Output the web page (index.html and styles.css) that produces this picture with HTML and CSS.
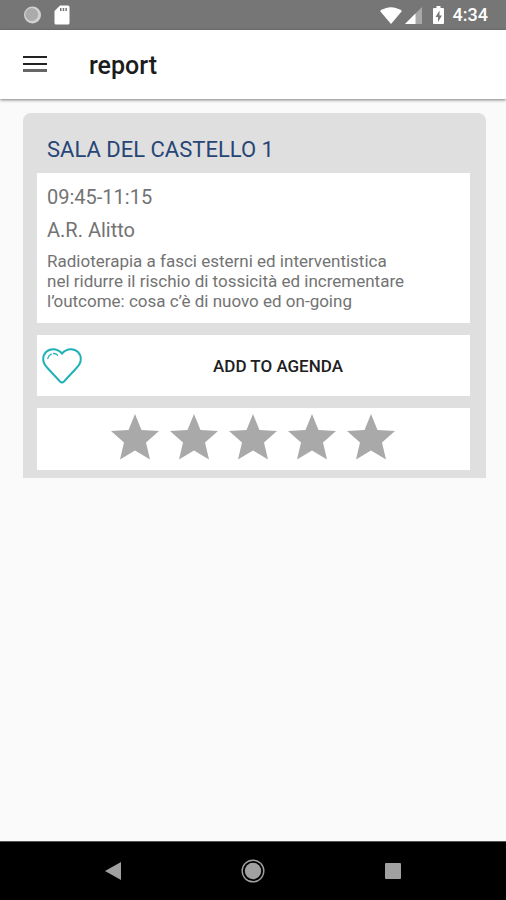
FILE: index.html
```html
<!DOCTYPE html>
<html lang="it">
<head>
<meta charset="utf-8">
<meta name="viewport" content="width=device-width, initial-scale=1">
<title>report</title>
<link rel="stylesheet" href="styles.css">
</head>
<body>
<svg class="defs" aria-hidden="true">
  <symbol id="star" viewBox="0 0 48 46"><path d="M24 0 30.500 16 48 17 35 28.500 39 45.500 24 36.500 9 45.500 13 28.500 0 17 17.500 16Z"/></symbol>
</svg>
<div class="status-bar">
  <div class="status-group notices">
    <svg width="20" height="20" viewBox="0 0 20 20" aria-hidden="true"><circle cx="10.500" cy="10" r="8.500" fill="#d2d2d2"/><circle cx="9.700" cy="9.500" r="6.500" fill="#ababab"/></svg>
    <svg width="16" height="20" viewBox="0 0 16 20" aria-hidden="true"><path fill="#fff" fill-rule="evenodd" d="M6 .5h8q1.500 0 1.500 1.500v16q0 1.500-1.500 1.500H2Q.5 19.500.5 18V6ZM6 3v3h1.500V3Zm2.700 0v3h1.500V3Zm2.700 0v3h1.500V3Z"/></svg>
  </div>
  <div class="status-group">
    <svg width="22" height="17" viewBox="0 0 22 17" aria-hidden="true"><path fill="#fff" d="M0 4Q11-3.500 22 4L11 17Z"/></svg>
    <svg width="17" height="17" viewBox="0 0 17 17" aria-hidden="true"><path fill="#a8a8a8" d="M17 0v17H0Z"/><path fill="#fff" d="M10.500 6.500V17H0Z"/></svg>
    <svg class="battery" width="11" height="18" viewBox="0 0 11 18" aria-hidden="true"><path fill="#fff" d="M3.500 0h4v2H10q1 0 1 1v14q0 1-1 1H1q-1 0-1-1V3q0-1 1-1h2.500Z"/><path fill="#767676" d="M6.500 4.500 2.500 11H5v5l4-6.500H6.500Z"/></svg>
    <time class="clock">4:34</time>
  </div>
</div>
<header class="app-bar">
  <button class="menu-button" type="button" aria-label="Menu">
    <svg width="24" height="18" viewBox="0 0 24 18" aria-hidden="true"><path fill="#222" d="M0 0h24v2H0ZM0 7h24v2H0Z"/><path fill="#666" d="M0 13h24v3H0Z"/></svg>
  </button>
  <h1 class="title">report</h1>
</header>
<main class="content">
  <article class="card">
    <h2 class="room">SALA DEL CASTELLO 1</h2>
    <section class="panel details">
      <p class="meta">09:45-11:15</p>
      <p class="meta">A.R. Alitto</p>
      <p class="topic">Radioterapia a fasci esterni ed interventistica<br>nel ridurre il rischio di tossicità ed incrementare<br>l’outcome: cosa c’è di nuovo ed on-going</p>
    </section>
    <section class="panel agenda">
      <button class="heart-button" type="button" aria-label="Preferiti">
        <svg width="40" height="36" viewBox="0 0 40 36" fill="none" stroke="#20b2b8" stroke-linecap="round" aria-hidden="true"><path stroke-width="2" d="M20 5.500C17 2 14.500 1.200 11 1.200 5.500 1.200 1.200 5.500 1.200 11c0 4 1.800 6.500 4.300 9L18 33.500q2 2 4 0L34.500 20c2.500-2.500 4.300-5 4.300-9 0-5.500-4.300-9.800-9.800-9.800-3.500 0-6 .8-9 4.300Z"/><path stroke-width="1.300" d="M5.800 10.500q.6-3.200 3.500-4.400M11.500 5.500q2.500-.2 4 1.700"/></svg>
      </button>
      <button class="agenda-button" type="button">ADD TO AGENDA</button>
    </section>
    <section class="panel rating" aria-label="Valutazione">
      <button class="star" type="button" aria-label="1"><svg width="48" height="46"><use href="#star"/></svg></button>
      <button class="star" type="button" aria-label="2"><svg width="48" height="46"><use href="#star"/></svg></button>
      <button class="star" type="button" aria-label="3"><svg width="48" height="46"><use href="#star"/></svg></button>
      <button class="star" type="button" aria-label="4"><svg width="48" height="46"><use href="#star"/></svg></button>
      <button class="star" type="button" aria-label="5"><svg width="48" height="46"><use href="#star"/></svg></button>
    </section>
  </article>
</main>
<nav class="nav-bar">
  <button type="button" aria-label="Back"><svg width="24" height="24" viewBox="0 0 24 24" aria-hidden="true"><path fill="#a0a0a0" d="M4 12 20 3v18Z"/></svg></button>
  <button type="button" aria-label="Home"><svg width="24" height="24" viewBox="0 0 24 24" aria-hidden="true"><circle cx="12" cy="12" r="8.200" fill="#a0a0a0"/><circle cx="12" cy="12" r="10.800" fill="none" stroke="#a0a0a0" stroke-width="1.400"/></svg></button>
  <button type="button" aria-label="Recent apps"><svg width="24" height="24" viewBox="0 0 24 24" aria-hidden="true"><rect x="4" y="4" width="16" height="16" rx="1" fill="#a0a0a0"/></svg></button>
</nav>
</body>
</html>
```
FILE: styles.css
```css
* {
  box-sizing: border-box;
}

body {
  display: flex;
  flex-direction: column;
  min-height: 100vh;
  margin: 0;
  background: #fafafa;
  color: #737373;
  font-family: Roboto, sans-serif;
}

h1,
h2,
p {
  margin: 0;
}

button {
  padding: 0;
  border: 0;
  background: none;
  font: inherit;
  cursor: pointer;
}

svg {
  display: block;
}

.defs {
  position: absolute;
  width: 0;
  height: 0;
}

.status-bar {
  display: flex;
  align-items: center;
  justify-content: space-between;
  height: 30px;
  padding: 0 18px 0 22px;
  background: #767676;
}

.status-group {
  display: flex;
  align-items: center;
  gap: 3px;
}

.notices {
  gap: 12px;
}

.battery {
  margin: 0 6px 0 8px;
}

.clock {
  color: #fff;
  font-size: 18px;
  font-weight: 500;
  line-height: 30px;
}

.app-bar {
  display: flex;
  align-items: center;
  gap: 42px;
  height: 69px;
  padding: 0 23px;
  background: #fff;
  box-shadow: 0 1px 3px rgba(0, 0, 0, 0.5);
}

.title {
  padding-top: 2px;
  color: #1c1c1c;
  font-size: 25px;
  font-weight: 500;
  line-height: 32px;
}

.content {
  flex: 1;
  padding: 14px 20px 14px 23px;
}

.card {
  display: grid;
  gap: 12px;
  padding: 24px 16px 8px 14px;
  border-radius: 8px 8px 0 0;
  background: #dfdfdf;
}

.room {
  padding: 1px 0 0 10px;
  margin-bottom: -1px;
  color: #274575;
  font-size: 22px;
  font-weight: 400;
  line-height: 24px;
}

.panel {
  background: #fff;
}

.details {
  padding: 12px 10px;
}

.meta {
  margin-bottom: 8px;
  font-size: 20px;
  line-height: 25px;
}

.topic {
  font-size: 17px;
  line-height: 20px;
}

.agenda {
  display: flex;
  align-items: center;
  height: 61px;
  padding: 0 6px 0 5px;
}

.agenda-button {
  flex: 1;
  padding-left: 10px;
  color: #202020;
  font-size: 17px;
  font-weight: 500;
  line-height: 40px;
}

.rating {
  display: flex;
  align-items: center;
  justify-content: center;
  gap: 11px;
  height: 62px;
  padding: 0 1px 4px 0;
}

.star {
  fill: #a9a9a9;
}

.nav-bar {
  display: flex;
  align-items: center;
  justify-content: center;
  gap: 116px;
  height: 59px;
  border-top: 1px solid #555;
  background: #000;
}
```
